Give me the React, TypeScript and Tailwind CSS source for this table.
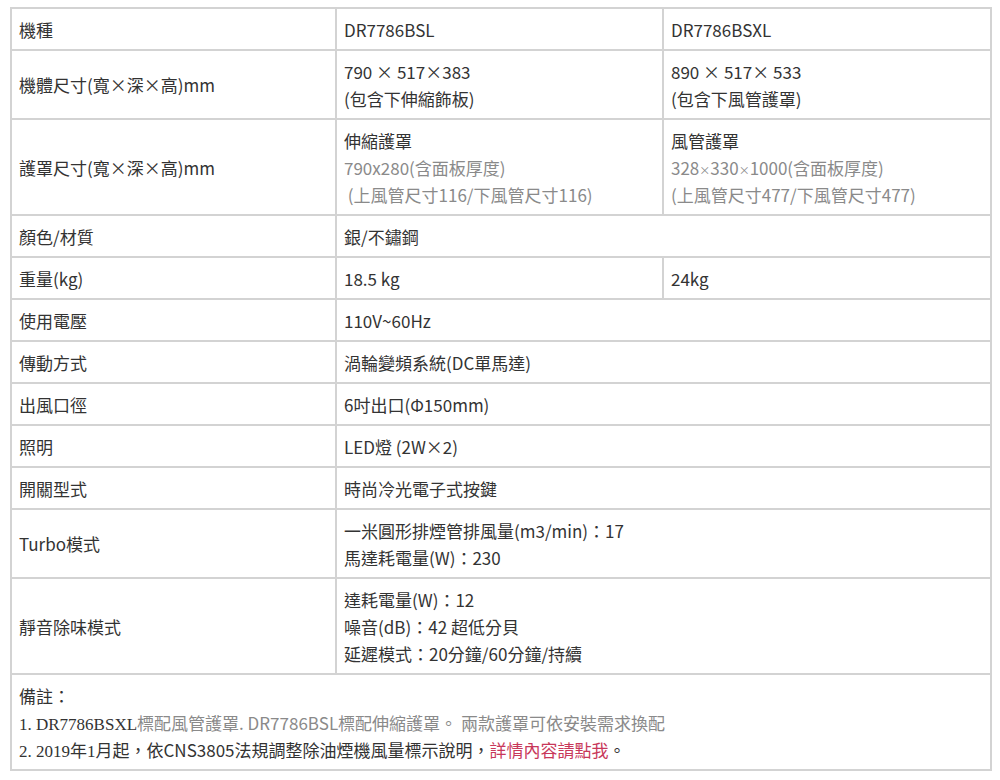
const sans = { fontFamily: '"Noto Sans CJK TC", "Noto Sans", sans-serif' };
const serif = { fontFamily: '"Liberation Serif", serif' };

type Row = {
  label: string;
  cells: React.ReactNode[][];
};

const gray = 'text-[#8a8a8a]';

const rows: Row[] = [
  { label: '機種', cells: [['DR7786BSL'], ['DR7786BSXL']] },
  {
    label: '機體尺寸(寬×深×高)mm',
    cells: [
      ['790 × 517×383', '(包含下伸縮飾板)'],
      ['890 × 517× 533', '(包含下風管護罩)'],
    ],
  },
  {
    label: '護罩尺寸(寬×深×高)mm',
    cells: [
      [
        '伸縮護罩',
        <span className={gray}>790x280(含面板厚度)</span>,
        <span className={gray}>&nbsp;(上風管尺寸116/下風管尺寸116)</span>,
      ],
      [
        '風管護罩',
        <span className={gray}>
          328<span className="text-[11px]">×</span>330<span className="text-[11px]">×</span>1000(含面板厚度)
        </span>,
        <span className={gray}>(上風管尺寸477/下風管尺寸477)</span>,
      ],
    ],
  },
  { label: '顏色/材質', cells: [['銀/不鏽鋼']] },
  { label: '重量(kg)', cells: [['18.5 kg'], ['24kg']] },
  { label: '使用電壓', cells: [['110V~60Hz']] },
  { label: '傳動方式', cells: [['渦輪變頻系統(DC單馬達)']] },
  { label: '出風口徑', cells: [['6吋出口(Φ150mm)']] },
  { label: '照明', cells: [['LED燈 (2W×2)']] },
  { label: '開關型式', cells: [['時尚冷光電子式按鍵']] },
  {
    label: 'Turbo模式',
    cells: [['一米圓形排煙管排風量(m3/min)：17', '馬達耗電量(W)：230']],
  },
  {
    label: '靜音除味模式',
    cells: [['達耗電量(W)：12', '噪音(dB)：42 超低分貝', '延遲模式：20分鐘/60分鐘/持續']],
  },
];

const td = 'border-2 border-[#d3d3d3] px-[7px] py-[6.5px] align-middle';

function Lines({ lines }: { lines: React.ReactNode[] }) {
  return (
    <>
      {lines.map((l, i) => (
        <div key={i} className="h-[27px] leading-[27px] whitespace-nowrap overflow-visible">
          {l}
        </div>
      ))}
    </>
  );
}

export default function App() {
  return (
    <div className="bg-white w-[1000px] h-[780px] pl-[10px] pt-[7px] text-[#333] text-[17px] leading-[27px]" style={sans}>
      <table className="w-[980px] border-collapse table-fixed">
        <colgroup>
          <col className="w-[325px]" />
          <col className="w-[327px]" />
          <col className="w-[328px]" />
        </colgroup>
        <tbody>
          {rows.map((r) => (
            <tr key={r.label}>
              <td className={td}>
                <Lines lines={[r.label]} />
              </td>
              {r.cells.length === 1 ? (
                <td className={td} colSpan={2}>
                  <Lines lines={r.cells[0]} />
                </td>
              ) : (
                r.cells.map((c, i) => (
                  <td key={i} className={td}>
                    <Lines lines={c} />
                  </td>
                ))
              )}
            </tr>
          ))}
          <tr>
            <td className={td} colSpan={3}>
              <Lines
                lines={[
                  '備註：',
                  <>
                    <span style={serif}>1. DR7786BSXL</span>
                    <span className={gray}>標配風管護罩. DR7786BSL標配伸縮護罩。 兩款護罩可依安裝需求換配</span>
                  </>,
                  <>
                    <span style={serif}>2. 2019</span>年<span style={serif}>1</span>
                    月起，依CNS3805法規調整除油煙機風量標示說明，
                    <span className="text-[#c8385a]">詳情內容請點我</span>。
                  </>,
                ]}
              />
            </td>
          </tr>
        </tbody>
      </table>
    </div>
  );
}
